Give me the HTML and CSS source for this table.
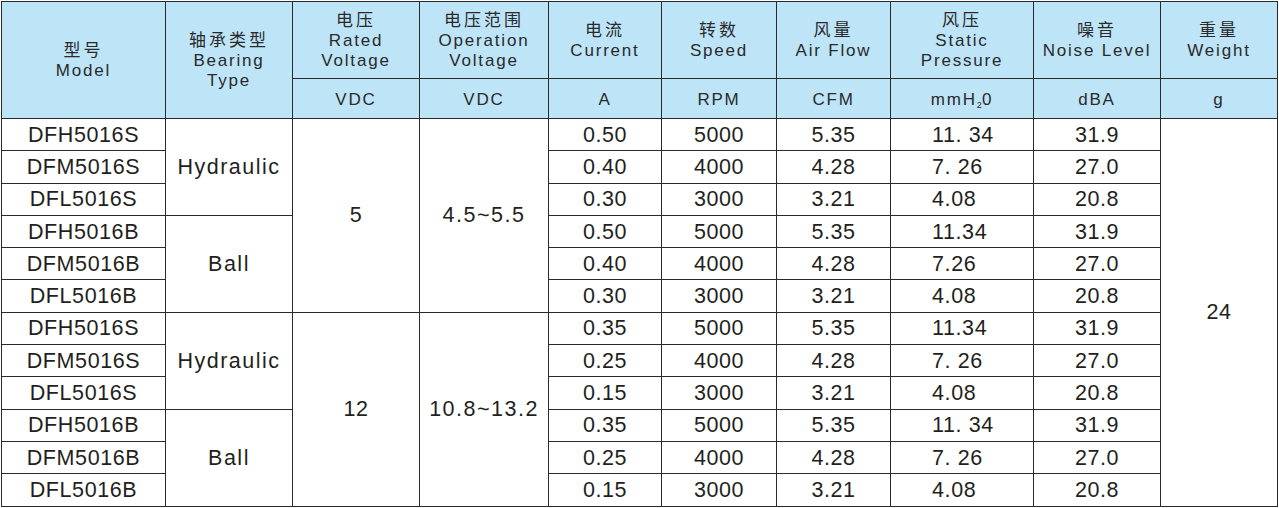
FILE: index.html
```html
<!DOCTYPE html>
<html lang="zh">
<head>
<meta charset="utf-8">
<title>DF5016 Specifications</title>
<link rel="stylesheet" href="styles.css">
</head>
<body>
<table class="spec">
  <colgroup>
    <col class="c-model"><col class="c-bear"><col class="c-rv"><col class="c-ov"><col class="c-cur"><col class="c-spd"><col class="c-air"><col class="c-sp"><col class="c-noise"><col class="c-wt">
  </colgroup>
  <thead>
    <tr class="h1">
      <th rowspan="2"><span class="zh">型号</span><br>Model</th>
      <th rowspan="2"><span class="zh">轴承类型</span><br>Bearing<br>Type</th>
      <th><span class="zh">电压</span><br>Rated<br>Voltage</th>
      <th><span class="zh">电压范围</span><br>Operation<br>Voltage</th>
      <th><span class="zh">电流</span><br>Current</th>
      <th><span class="zh">转数</span><br>Speed</th>
      <th><span class="zh">风量</span><br>Air Flow</th>
      <th><span class="zh">风压</span><br>Static<br>Pressure</th>
      <th><span class="zh">噪音</span><br>Noise Level</th>
      <th><span class="zh">重量</span><br>Weight</th>
    </tr>
    <tr class="h2">
      <th>VDC</th><th>VDC</th><th>A</th><th>RPM</th><th>CFM</th><th>mmH<sub>2</sub>0</th><th>dBA</th><th>g</th>
    </tr>
  </thead>
  <tbody>
    <tr><td>DFH5016S</td><td rowspan="3" class="bear">Hydraulic</td><td rowspan="6">5</td><td rowspan="6" class="range">4.5~5.5</td><td>0.50</td><td>5000</td><td>5.35</td><td class="sp">11. 34</td><td>31.9</td><td rowspan="12">24</td></tr>
    <tr><td>DFM5016S</td><td>0.40</td><td>4000</td><td>4.28</td><td class="sp">7. 26</td><td>27.0</td></tr>
    <tr><td>DFL5016S</td><td>0.30</td><td>3000</td><td>3.21</td><td class="sp">4.08</td><td>20.8</td></tr>
    <tr><td>DFH5016B</td><td rowspan="3" class="bear">Ball</td><td>0.50</td><td>5000</td><td>5.35</td><td class="sp">11.34</td><td>31.9</td></tr>
    <tr><td>DFM5016B</td><td>0.40</td><td>4000</td><td>4.28</td><td class="sp">7.26</td><td>27.0</td></tr>
    <tr><td>DFL5016B</td><td>0.30</td><td>3000</td><td>3.21</td><td class="sp">4.08</td><td>20.8</td></tr>
    <tr><td>DFH5016S</td><td rowspan="3" class="bear">Hydraulic</td><td rowspan="6">12</td><td rowspan="6" class="range">10.8~13.2</td><td>0.35</td><td>5000</td><td>5.35</td><td class="sp">11.34</td><td>31.9</td></tr>
    <tr><td>DFM5016S</td><td>0.25</td><td>4000</td><td>4.28</td><td class="sp">7. 26</td><td>27.0</td></tr>
    <tr><td>DFL5016S</td><td>0.15</td><td>3000</td><td>3.21</td><td class="sp">4.08</td><td>20.8</td></tr>
    <tr><td>DFH5016B</td><td rowspan="3" class="bear">Ball</td><td>0.35</td><td>5000</td><td>5.35</td><td class="sp">11. 34</td><td>31.9</td></tr>
    <tr><td>DFM5016B</td><td>0.25</td><td>4000</td><td>4.28</td><td class="sp">7. 26</td><td>27.0</td></tr>
    <tr><td>DFL5016B</td><td>0.15</td><td>3000</td><td>3.21</td><td class="sp">4.08</td><td>20.8</td></tr>
  </tbody>
</table>
</body>
</html>
```
FILE: styles.css
```css
html, body {
  margin: 0;
  padding: 0;
  background: #ffffff;
}
body {
  padding: 1px 0 0 1px;
  font-family: "Liberation Sans", Arial, "Noto Sans CJK SC", sans-serif;
  color: #231f20;
}
.spec {
  border-collapse: collapse;
  table-layout: fixed;
  width: 1277px;
  border: 1px solid #2a2a2a;
}
.c-model { width: 164px; }
.c-bear { width: 127px; }
.c-rv { width: 127px; }
.c-ov { width: 129px; }
.c-cur { width: 113px; }
.c-spd { width: 115px; }
.c-air { width: 114px; }
.c-sp { width: 143px; }
.c-noise { width: 127px; }
.c-wt { width: 117px; }

.spec th, .spec td {
  border: 1px solid #2a2a2a;
  padding: 0;
  text-align: center;
  vertical-align: middle;
  white-space: nowrap;
}
.spec th {
  background: #bee4f8;
  font-weight: normal;
  font-size: 17px;
  line-height: 20px;
  letter-spacing: 1.8px;
  color: #2a2a2a;
}
.zh {
  font-family: "Noto Sans CJK SC", sans-serif;
  letter-spacing: 3px;
}
.h1 { height: 77px; }
.h2 { height: 40px; }
.h2 th { padding-top: 2px; }
.spec sub {
  font-size: 9px;
  line-height: 0;
  vertical-align: -3px;
  letter-spacing: 0;
}
.spec td {
  font-size: 21.5px;
  letter-spacing: 0.6px;
  height: 31.3px;
  line-height: 24px;
}
.spec td.bear { letter-spacing: 1.5px; }
.spec td.range { letter-spacing: 1.5px; }
.spec td.sp {
  text-align: left;
  padding-left: 41px;
}
```
